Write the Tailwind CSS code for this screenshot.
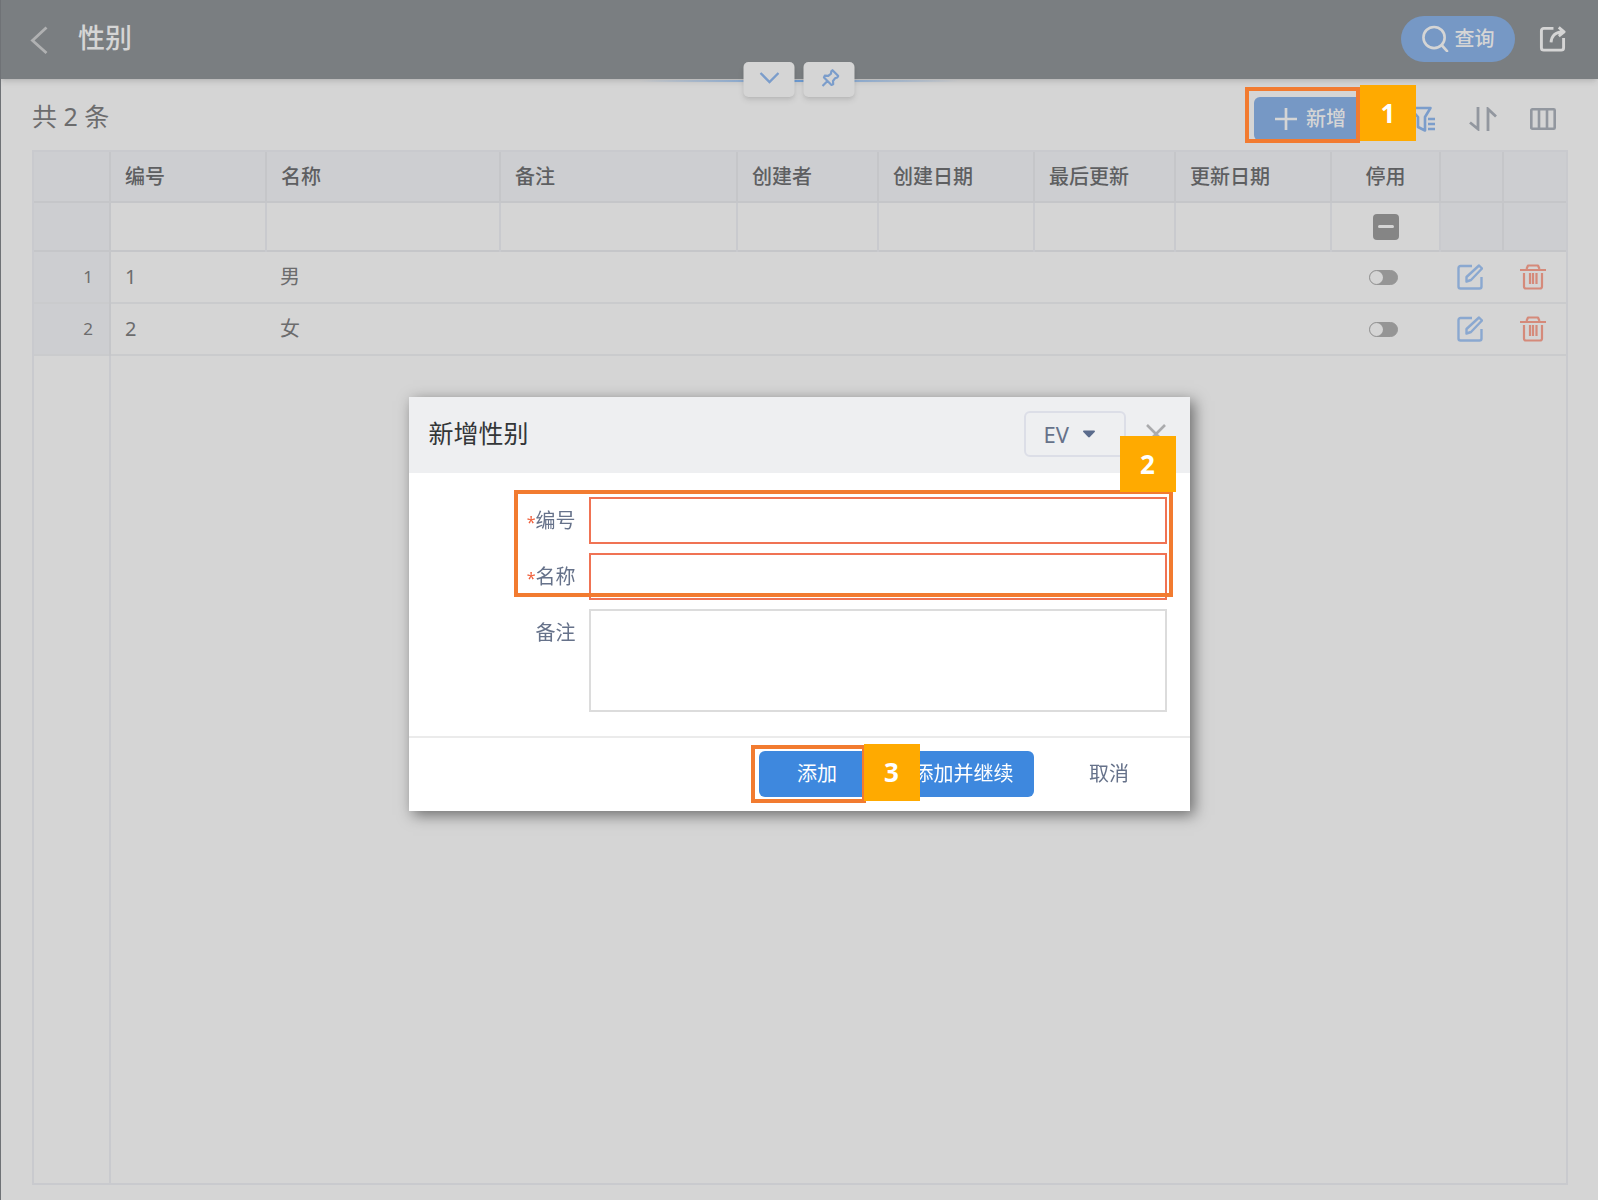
<!DOCTYPE html>
<html lang="zh-CN">
<head>
  <meta charset="UTF-8" />
  <meta name="viewport" content="width=device-width, initial-scale=1.0" />
  <title>性别</title>
  <script src="https://cdn.jsdelivr.net/npm/@tailwindcss/browser@4"></script>
  <style>
    body { font-family: 'Noto Sans', 'Noto Sans CJK SC', sans-serif; }
  </style>
</head>
<body class="bg-[#d5d5d5] text-[#6c6c6d] text-xl leading-7 min-h-screen flex flex-col border-l border-[#6f7276]">

  <!-- Top bar -->
  <header class="relative -ml-px h-[79px] shrink-0 bg-[#7a7e81] flex items-center pl-7 pr-8 shadow-md/10">
    <button type="button" aria-label="返回" class="w-6 h-7">
      <svg class="w-6 h-7" viewBox="0 0 24 28" fill="none" stroke="#b0b1b2" stroke-width="2.8"><path d="M18.500 1.500 4.500 14.500l14 12.500" /></svg>
    </button>
    <h1 class="ml-[26px] text-[27px] leading-9 font-medium text-[#d5d5d5] mb-1">性别</h1>

    <button type="button" class="ml-auto mb-0.5 h-[46px] w-[114px] rounded-full bg-[#7698c5] text-[#d5d5d5] font-medium flex items-center justify-center gap-1.5">
      <svg class="w-[27px] h-[27px]" viewBox="0 0 28 28" fill="none" stroke="currentColor" stroke-width="2.7" stroke-linecap="round"><circle cx="12.500" cy="13" r="11" /><path d="m20.500 21 5.500 6" /></svg>
      查询
    </button>
    <button type="button" aria-label="分享" class="ml-6 mb-0.5">
      <svg class="w-[27px] h-7" viewBox="0 0 28 28" fill="none" stroke="#d5d5d5" stroke-width="3" stroke-linejoin="round"><path d="M15 3H5a2.500 2.500 0 0 0-2.500 2.500V23A2.500 2.500 0 0 0 5 25.500h18a2.500 2.500 0 0 0 2.500-2.500V13" /><path d="M12.500 17.500C13 11 16 7 25 6.500M20.500 2l5.500 4.500-5.500 4.500" /></svg>
    </button>

    <!-- Collapse and pin tabs on the lower edge of the bar -->
    <div class="absolute left-1/2 -translate-x-1/2 -bottom-[3px] w-80 h-0.5 bg-linear-to-r from-transparent via-[#6c99d0] to-transparent"></div>
    <div class="absolute left-1/2 -translate-x-1/2 -bottom-[18px] flex gap-[9px]">
      <button type="button" aria-label="展开" class="w-[51px] h-[35px] rounded-[5px] bg-[#d5d5d5] shadow-md/10 flex items-center justify-center">
        <svg class="w-5 h-3 mb-1" viewBox="0 0 20 12" fill="none" stroke="#7b9dcb" stroke-width="2.4"><path d="m1 1 9 9 9-9" /></svg>
      </button>
      <button type="button" aria-label="固定" class="w-[51px] h-[35px] rounded-[5px] bg-[#d5d5d5] shadow-md/10 flex items-center justify-center">
        <svg class="w-[18px] h-[18px] mb-1 ml-0.5" viewBox="0 0 18 18" fill="none" stroke="#7b9dcb" stroke-width="2.200" stroke-linejoin="round"><path d="M11 1.200 16.800 7l-1 1.500-2.300.8-2 2.700.2 3.300-1.700.7L2.500 8.500l.8-1.800 3.500.1 2.700-2.200.3-2.300zM6 12l-5 5" /></svg>
      </button>
    </div>
  </header>

  <main class="grow flex flex-col pl-[31px] pr-[30px] pb-[15px]">
    <div class="h-[71px] flex items-center">
      <p class="text-[25px] leading-8 mt-0.5">共 2 条</p>
      <div class="relative ml-auto mt-2">
        <button type="button" class="h-11 w-[112px] rounded-md bg-[#7698c5] text-[#d5d5d5] font-medium flex items-center justify-center gap-2">
          <svg class="w-6 h-6" viewBox="0 0 24 24" fill="none" stroke="currentColor" stroke-width="2.7"><path d="M12 1v22M1 12h22" /></svg>
          新增
        </button>
        <div class="absolute -left-[9px] -top-[10px] w-[115px] h-14 border-4 border-[#f27b30]"></div>
        <div class="absolute left-[106px] -top-3 w-14 h-14 bg-[#ffaa00] text-white text-[26px] font-bold flex items-center justify-center">1</div>
      </div>
      <button type="button" aria-label="筛选" class="ml-[43px] mt-2">
        <svg class="w-[26px] h-[26px]" viewBox="0 0 26 26" fill="none" stroke="#7b9dcb" stroke-width="2.600" stroke-linejoin="round"><path d="M1 2h20.500L16 11v13.500L9 21V11z" /><path d="M19 13h7M19 18h7M19 23h7" /></svg>
      </button>
      <button type="button" aria-label="排序" class="ml-[34px] mt-2">
        <svg class="w-7 h-6" viewBox="0 0 28 24" fill="none" stroke="#92979f" stroke-width="2.800"><path d="M9 0v22L1 15.500M19 24V2l8 7.500" /></svg>
      </button>
      <button type="button" aria-label="列" class="ml-[33px] mr-3 mt-2">
        <svg class="w-[26px] h-[22px]" viewBox="0 0 26 22" fill="none" stroke="#92979f" stroke-width="2.600"><rect x="1.300" y="1.300" width="23.400" height="19.400" rx="1" /><path d="M9 1v20M17 1v20" /></svg>
      </button>
    </div>

    <div class="grow flex flex-col border-2 border-[#c9cace]">
      <table class="w-full table-fixed border-collapse text-left">
        <colgroup>
          <col class="w-[76px]" />
          <col class="w-[156px]" />
          <col class="w-[234px]" />
          <col />
          <col class="w-[141px]" />
          <col class="w-[156px]" />
          <col class="w-[141px]" />
          <col class="w-[156px]" />
          <col class="w-[109px]" />
          <col class="w-[63px]" />
          <col class="w-[63px]" />
        </colgroup>
        <thead class="text-[#5e5f61]">
          <tr class="h-[50px] bg-[#cdced1] border-b-2 border-[#c5c6c9]">
            <th class="border-r-2 border-[#c5c6c9]"></th>
            <th class="border-r-2 border-[#c5c6c9] px-3.5 font-medium">编号</th>
            <th class="border-r-2 border-[#c5c6c9] px-3.5 font-medium">名称</th>
            <th class="border-r-2 border-[#c5c6c9] px-3.5 font-medium">备注</th>
            <th class="border-r-2 border-[#c5c6c9] px-3.5 font-medium">创建者</th>
            <th class="border-r-2 border-[#c5c6c9] px-3.5 font-medium">创建日期</th>
            <th class="border-r-2 border-[#c5c6c9] px-3.5 font-medium">最后更新</th>
            <th class="border-r-2 border-[#c5c6c9] px-3.5 font-medium">更新日期</th>
            <th class="border-r-2 border-[#c5c6c9] font-medium text-center">停用</th>
            <th class="border-r-2 border-[#c5c6c9]"></th>
            <th></th>
          </tr>
          <tr class="h-[49px] border-b-2 border-[#c5c6c9]">
            <td class="border-r-2 border-[#c5c6c9] bg-[#cdced1]"></td>
            <td class="border-r-2 border-[#c9cace]"></td>
            <td class="border-r-2 border-[#c9cace]"></td>
            <td class="border-r-2 border-[#c9cace]"></td>
            <td class="border-r-2 border-[#c9cace]"></td>
            <td class="border-r-2 border-[#c9cace]"></td>
            <td class="border-r-2 border-[#c9cace]"></td>
            <td class="border-r-2 border-[#c9cace]"></td>
            <td class="border-r-2 border-[#c9cace]">
              <button type="button" aria-label="停用筛选" class="mx-auto w-[26px] h-[26px] rounded-[4px] bg-[#858585] flex items-center justify-center"><span class="w-4 h-[3px] rounded-sm bg-[#d5d5d5]"></span></button>
            </td>
            <td class="border-r-2 border-[#c5c6c9] bg-[#cdced1]"></td>
            <td class="bg-[#cdced1]"></td>
          </tr>
        </thead>
        <tbody>
          <tr class="h-[52px] border-b-2 border-[#cacbcd]">
            <td class="border-r-2 border-[#c5c6c9] bg-[#cdced1] text-right text-[17px] pr-4">1</td>
            <td class="px-3.5">1</td>
            <td class="px-3.5">男</td>
            <td></td><td></td><td></td><td></td><td></td>
            <td class="pr-1">
              <button type="button" role="switch" aria-checked="false" aria-label="停用" class="mx-auto w-[29px] h-[15px] rounded-full bg-[#959595] border border-[#959595] flex items-center"><span class="w-[13px] h-[13px] rounded-full bg-[#d5d5d5]"></span></button>
            </td>
            <td>
              <button type="button" aria-label="编辑" class="block mx-auto pr-1">
                <svg class="w-[26px] h-[26px]" viewBox="0 0 26 26" fill="none" stroke="#8aa8d0" stroke-width="2.400" stroke-linejoin="round"><path d="M15 2H3.500a2 2 0 0 0-2 2v18.500a2 2 0 0 0 2 2h19a2 2 0 0 0 2-2V13" /><path d="M22 1.500 25 4.500 14 16l-4.500 1.500V13z" /></svg>
              </button>
            </td>
            <td>
              <button type="button" aria-label="删除" class="block mx-auto pr-1">
                <svg class="w-[26px] h-[26px]" viewBox="0 0 26 26" fill="none" stroke="#d58a7a" stroke-width="2.200" stroke-linejoin="round"><path d="M0 6h26M6.500 5l1.500-3.500h10L19.500 5M4 9v13.500a2 2 0 0 0 2 2h14a2 2 0 0 0 2-2V9M10 9v11M13 9v11M16.500 9v11" /></svg>
              </button>
            </td>
          </tr>
          <tr class="h-[52px] border-b-2 border-[#cacbcd]">
            <td class="border-r-2 border-[#c5c6c9] bg-[#cdced1] text-right text-[17px] pr-4">2</td>
            <td class="px-3.5">2</td>
            <td class="px-3.5">女</td>
            <td></td><td></td><td></td><td></td><td></td>
            <td class="pr-1">
              <button type="button" role="switch" aria-checked="false" aria-label="停用" class="mx-auto w-[29px] h-[15px] rounded-full bg-[#959595] border border-[#959595] flex items-center"><span class="w-[13px] h-[13px] rounded-full bg-[#d5d5d5]"></span></button>
            </td>
            <td>
              <button type="button" aria-label="编辑" class="block mx-auto pr-1">
                <svg class="w-[26px] h-[26px]" viewBox="0 0 26 26" fill="none" stroke="#8aa8d0" stroke-width="2.400" stroke-linejoin="round"><path d="M15 2H3.500a2 2 0 0 0-2 2v18.500a2 2 0 0 0 2 2h19a2 2 0 0 0 2-2V13" /><path d="M22 1.500 25 4.500 14 16l-4.500 1.500V13z" /></svg>
              </button>
            </td>
            <td>
              <button type="button" aria-label="删除" class="block mx-auto pr-1">
                <svg class="w-[26px] h-[26px]" viewBox="0 0 26 26" fill="none" stroke="#d58a7a" stroke-width="2.200" stroke-linejoin="round"><path d="M0 6h26M6.500 5l1.500-3.500h10L19.500 5M4 9v13.500a2 2 0 0 0 2 2h14a2 2 0 0 0 2-2V9M10 9v11M13 9v11M16.500 9v11" /></svg>
              </button>
            </td>
          </tr>
        </tbody>
      </table>
      <!-- Empty rest of the grid, keeps the row number column line -->
      <div class="grow w-[77px] border-r-2 border-[#c9cace]"></div>
    </div>
  </main>

  <!-- Dialog -->
  <div class="fixed inset-0 flex items-center justify-center pt-2">
    <form role="dialog" aria-labelledby="dialogTitle" class="w-[781px] bg-white text-[#66728a] shadow-[4px_4px_14px_0px_rgba(0,0,0,0.5)]">
      <div class="h-[76px] bg-[#eeeff1] flex items-center pl-5 pr-6">
        <h2 id="dialogTitle" class="text-[25px] leading-8 text-[#333638] mb-1">新增性别</h2>
        <button type="button" class="ml-auto h-[46px] w-[102px] mb-0.5 rounded-md border-2 border-[#dcdee7] flex items-center pl-[18px] gap-3.5 text-[22px]">
          EV
          <svg class="w-3 h-2" viewBox="0 0 14 8" fill="#5a6b8c"><path d="M1 0h12a1 1 0 0 1 .6 1.600L8 7.500a1.400 1.400 0 0 1-2 0L.4 1.600A1 1 0 0 1 1 0z" /></svg>
        </button>
        <button type="button" aria-label="关闭" class="ml-5 mb-0.5">
          <svg class="w-5 h-5" viewBox="0 0 20 20" fill="none" stroke="#aaabad" stroke-width="2.600"><path d="m1 1 18 18M19 1 1 19" /></svg>
        </button>
      </div>

      <div class="pt-6 pb-6 pr-[23px] flex flex-col gap-[9px]">
        <div class="relative flex flex-col gap-[9px]">
          <div class="flex items-center">
            <label for="code" class="w-[180px] pr-[13px] text-right"><span class="text-base text-[#f0603c]">*</span>编号</label>
            <input id="code" type="text" class="grow h-[47px] border-2 border-[#f07354] px-3 outline-none" />
          </div>
          <div class="flex items-center">
            <label for="name" class="w-[180px] pr-[13px] text-right"><span class="text-base text-[#f0603c]">*</span>名称</label>
            <input id="name" type="text" class="grow h-[47px] border-2 border-[#f07354] px-3 outline-none" />
          </div>
          <div class="absolute left-[105px] -right-1.5 -top-[7px] h-[107px] border-4 border-[#f27b30] pointer-events-none"></div>
          <div class="absolute -right-[9px] -top-[61px] w-14 h-14 bg-[#ffaa00] text-white text-[26px] font-bold flex items-center justify-center">2</div>
        </div>
        <div class="flex items-start">
          <label for="remark" class="w-[180px] pr-[13px] pt-2.5 text-right">备注</label>
          <textarea id="remark" class="grow h-[103px] border-2 border-[#dcdcdc] px-3 py-2 outline-none resize-none"></textarea>
        </div>
      </div>

      <div class="h-[75px] border-t-2 border-[#ebebeb] flex items-center justify-end gap-[18px] pr-[23px] pb-0.5">
        <div class="relative">
          <button type="submit" class="block h-[46px] w-[117px] rounded-md bg-[#3e88de] text-white">添加</button>
          <div class="absolute -left-2 -top-1.5 w-[115px] h-[58px] border-4 border-[#f27b30] pointer-events-none"></div>
          <div class="absolute z-10 left-[105px] -top-[7px] w-14 h-[57px] bg-[#ffaa00] text-white text-[26px] font-bold flex items-center justify-center">3</div>
        </div>
        <button type="button" class="h-[46px] w-[140px] rounded-md bg-[#3e88de] text-white">添加并继续</button>
        <button type="button" class="h-[46px] w-[115px]">取消</button>
      </div>
    </form>
  </div>

</body>
</html>
